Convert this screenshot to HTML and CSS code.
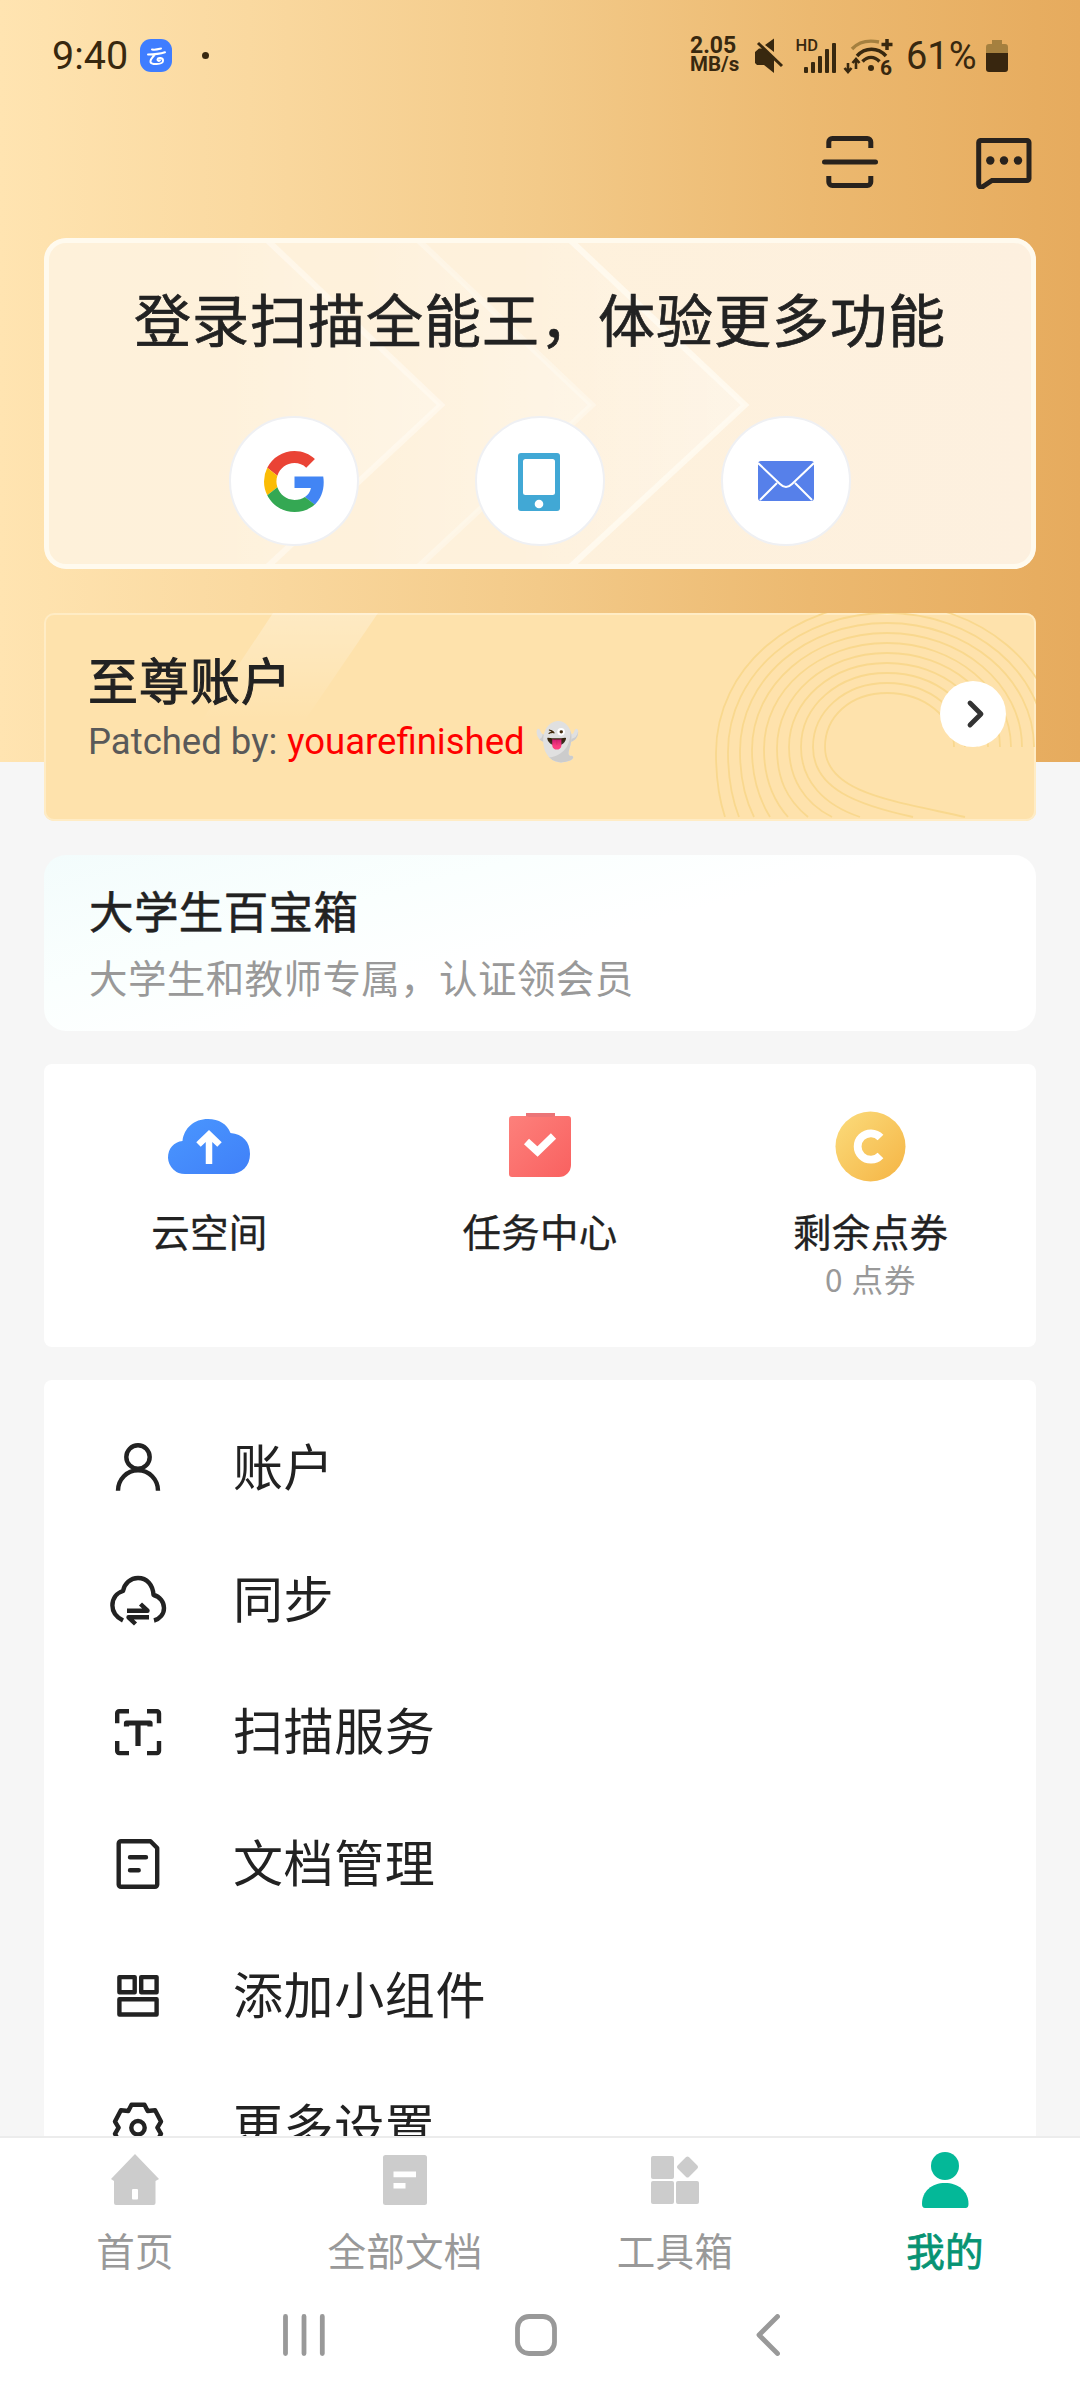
FILE: index.html
```html
<!DOCTYPE html>
<html lang="zh-CN">
<head>
<meta charset="utf-8">
<title>我的</title>
<link rel="stylesheet" href="styles.css">
</head>
<body>
<div class="screen">
  <header class="status">
    <div class="status-left">
      <span class="clock">9:40</span>
      <svg class="cloud-badge" width="32" height="33" viewBox="0 0 32 33"><rect width="32" height="33" rx="11" fill="#3f7dff"/><path d="M12 10.500c4 .6 6-.2 9-1M8 15.500c6 0 12-.6 17-2.200M15 15.500c-2 2-5 5-4.500 7.500.5 2.700 12 3 12.500-1 .4-3.500-5-4-5.500-1.500-.2 1.500 1.500 1.800 2.500.8" fill="none" stroke="#fff" stroke-width="2" stroke-linecap="round"/></svg>
      <span class="dot"></span>
    </div>
    <div class="status-right">
      <div class="speed"><span class="rate">2.05</span><span class="unit">MB/s</span></div>
      <svg class="signals" width="146" height="40" viewBox="0 0 146 40">
        <g fill="#38280f">
          <path d="M0 16L4 12.500 9 12.500 19 21.500V37L9 29H2L0 27zM10 9l9-6.500V16z"/>
          <path d="M3 7l24 23" stroke="#38280f" stroke-width="3" fill="none"/>
          <text x="40.500" y="15" class="hd">HD</text>
          <rect x="49" y="31" width="4" height="6" rx="1"/><rect x="56" y="26" width="4" height="11" rx="1"/><rect x="63" y="20" width="4" height="17" rx="1"/><rect x="70" y="13" width="4" height="24" rx="1"/><rect x="77" y="7" width="4" height="30" rx="1"/>
          <circle cx="116" cy="32" r="3"/>
          <path d="M132 3v11M126.500 8.500h11" stroke="#38280f" stroke-width="3.500"/>
          <text x="125" y="38.500" class="wifi-gen">6</text>
        </g>
        <g fill="none" stroke="#38280f" stroke-width="3.400">
          <path d="M97 13c7-7.500 17-9 27-7" stroke="#a5803f"/>
          <path d="M102 20c8-9 21-9 29 0M107.500 25.500c5-5.500 12-5.500 17 0"/>
          <path d="M93 27v9M89.500 32l3.500 4 3.500-4M101 33v-10M97.500 27l3.500-4 3.500 4" stroke-width="2.600"/>
        </g>
      </svg>
      <span class="percent">61%</span>
      <svg class="battery" width="22" height="32" viewBox="0 0 22 32"><path d="M6 0h10v4h3a3 3 0 0 1 3 3v7H0V7a3 3 0 0 1 3-3h3z" fill="#a5803f"/><path d="M0 13h22v16a3 3 0 0 1-3 3H3a3 3 0 0 1-3-3z" fill="#38260f"/></svg>
    </div>
  </header>

  <div class="toolbar">
    <svg width="56" height="53" viewBox="0 0 56 53" fill="none" stroke="#28221d" stroke-width="5"><path d="M6.800 12V6a3.500 3.500 0 0 1 3.500-3.500h35A3.500 3.500 0 0 1 48.800 6v6M6.800 40v6a3.500 3.500 0 0 0 3.500 3.500h35a3.500 3.500 0 0 0 3.500-3.500v-6"/><path d="M2.500 26h51" stroke-linecap="round"/></svg>
    <svg width="56" height="53" viewBox="0 0 56 53"><path d="M5 4.500h46a2 2 0 0 1 2 2v36a2 2 0 0 1-2 2H16L7 50.500c-2 1.200-4.300.5-4.300-2V6.500a2 2 0 0 1 2.300-2z" fill="none" stroke="#28221d" stroke-width="5"/><g fill="#28221d"><circle cx="14.300" cy="24.500" r="4.200"/><circle cx="28" cy="24.500" r="4.200"/><circle cx="42" cy="24.500" r="4.200"/></g></svg>
  </div>

  <main class="content">
    <section class="login">
      <svg class="backdrop" width="992" height="331" viewBox="0 0 992 331">
        <defs><linearGradient id="band" x1="0" y1="0" x2="1" y2="0"><stop offset=".3" stop-color="#fff" stop-opacity="0"/><stop offset="1" stop-color="#fff" stop-opacity=".3"/></linearGradient></defs>
        <path d="M66 0H221L397 167 221 331H66z" fill="url(#band)"/>
        <path d="M221 0H372L548 167 372 331H221L397 167z" fill="url(#band)"/>
        <path d="M372 0H524L701 167 524 331H372L548 167z" fill="url(#band)"/>
        <g fill="none" stroke="#fffcf4" stroke-width="6"><path d="M221 0L397 167 221 331" stroke-opacity=".55"/><path d="M372 0L548 167 372 331" stroke-opacity=".4"/><path d="M524 0L701 167 524 331" stroke-opacity=".7"/></g>
      </svg>
      <h1>登录扫描全能王，体验更多功能</h1>
      <div class="providers">
        <span class="provider"><svg width="61" height="61" viewBox="0 0 48 48"><path fill="#EA4335" d="M24 9.500c3.540 0 6.710 1.220 9.210 3.600l6.850-6.850C35.900 2.380 30.470 0 24 0 14.620 0 6.510 5.380 2.560 13.220l7.980 6.190C12.430 13.720 17.740 9.500 24 9.500z"/><path fill="#4285F4" d="M46.980 24.550c0-1.570-.15-3.090-.38-4.550H24v9.020h12.940c-.58 2.960-2.260 5.480-4.780 7.180l7.730 6c4.510-4.180 7.090-10.360 7.090-17.650z"/><path fill="#FBBC05" d="M10.530 28.590A14.500 14.500 0 0 1 9.770 24c0-1.600.27-3.140.76-4.590l-7.980-6.190A23.900 23.900 0 0 0 0 24c0 3.880.92 7.540 2.560 10.780z"/><path fill="#34A853" d="M24 48c6.480 0 11.930-2.130 15.890-5.810l-7.730-6c-2.150 1.450-4.920 2.300-8.160 2.300-6.260 0-11.570-4.220-13.470-9.910l-7.980 6.190C6.510 42.620 14.620 48 24 48z"/></svg></span>
        <span class="provider phone"><svg width="42" height="58" viewBox="0 0 42 58"><rect width="42" height="58" rx="3" fill="#41a8d5"/><rect x="5" y="6" width="32" height="36" rx="2.500" fill="#fff"/><circle cx="21" cy="51" r="4.300" fill="#fff"/></svg></span>
        <span class="provider"><svg width="56" height="40" viewBox="0 0 56 40"><rect width="56" height="40" rx="3" fill="#5680ea"/><path d="M0 2L22 23c4 4 8 4 12 0L56 2M2 39L19 22M54 39L37 22" fill="none" stroke="#fff" stroke-width="2"/></svg></span>
      </div>
    </section>

    <section class="vip">
      <svg class="backdrop" width="992" height="208" viewBox="0 0 992 208">
        <defs><linearGradient id="stripe" x1="0" y1="0" x2="0" y2="1"><stop offset="0" stop-color="#fff" stop-opacity=".28"/><stop offset="1" stop-color="#fff" stop-opacity="0"/></linearGradient></defs>
        <path d="M229 0H334L259 110H156z" fill="url(#stripe)"/>
        <g fill="none" stroke="#f9d88e" stroke-width="1.800">
          <path d="M910 134C910 104 880 80 843 80S781 104 781 134C781 180 850 188 921 204"/>
          <path d="M921 134C921 99 886 70 843 70S769 99 769 134C769 176 814 192 869 204"/>
          <path d="M933 134C933 93 892 60 843 60S757 93 757 134C757 168 780 192 816 204"/>
          <path d="M944 134C944 88 899 50 843 50S745 88 745 134C745 165 760 190 788 204"/>
          <path d="M956 134C956 82 905 40 843 40S733 82 733 135C733 165 742 186 764 204"/>
          <path d="M967 134C967 77 911 30 843 30S720 77 720 136C720 165 728 186 744 204"/>
          <path d="M978 134C978 71 917 20 843 20S708 71 708 137C708 165 715 186 726 204"/>
          <path d="M990 134C990 66 924 10 843 10S696 66 696 138C696 165 701 186 710 204"/>
          <path d="M1001 134C1001 60 930 0 843 0S684 60 684 139C684 165 688 186 695 204"/>
          <path d="M1013 134C1013 54 936-10 843-10S672 54 672 140C672 165 675 186 681 204"/>
        </g>
      </svg>
      <div class="vip-text">
        <h2>至尊账户</h2>
        <p>Patched by: <em>youarefinished</em> <span class="emoji">👻</span></p>
      </div>
      <span class="go"><svg width="20" height="30" viewBox="0 0 20 30"><path d="M4 4l11 11L4 26" fill="none" stroke="#333" stroke-width="4.800" stroke-linecap="round" stroke-linejoin="round"/></svg></span>
    </section>

    <section class="student">
      <h3>大学生百宝箱</h3>
      <p>大学生和教师专属，认证领会员</p>
    </section>

    <section class="quick">
      <div class="quick-item">
        <svg width="84" height="72" viewBox="0 0 84 72"><defs><linearGradient id="blue" x1="0" y1="0" x2="1" y2="1"><stop offset="0" stop-color="#4a97ff"/><stop offset="1" stop-color="#4080f8"/></linearGradient></defs><path d="M18 63A17 17 0 0 1 1 47C1 37 7 31 15.500 30 17 17 27 8 41 8c11 0 19 5 22.500 14C76 23 83 31 83 43c0 12-8 20-20 20z" fill="url(#blue)"/><path d="M42 53V25M31.500 33.500L42 23.500 52.500 33.500" fill="none" stroke="#fff" stroke-width="6.500"/></svg>
        <span class="label">云空间</span>
      </div>
      <div class="quick-item">
        <svg width="62" height="72" viewBox="0 0 62 72"><defs><linearGradient id="red" x1="0" y1="0" x2="1" y2="1"><stop offset="0" stop-color="#fd817c"/><stop offset="1" stop-color="#f96160"/></linearGradient></defs><path d="M3 5H17V2H46V5H59a3 3 0 0 1 3 3V54A12 12 0 0 1 50 66H3a3 3 0 0 1-3-3V8a3 3 0 0 1 3-3z" fill="url(#red)"/><path d="M17 5V2H46V5l-3 1H20z" fill="#eb7477"/><path d="M17.500 30.500l11 10 16-15.500" fill="none" stroke="#fff" stroke-width="7.500"/></svg>
        <span class="label">任务中心</span>
      </div>
      <div class="quick-item">
        <svg width="72" height="72" viewBox="0 0 72 72"><defs><linearGradient id="gold" x1="0" y1="0" x2="1" y2="1"><stop offset="0" stop-color="#fbdc7c"/><stop offset="1" stop-color="#f5b444"/></linearGradient></defs><circle cx="35.500" cy="35.500" r="35" fill="url(#gold)"/><path d="M45.500 26.500A13.200 13.200 0 1 0 45.500 44.500" fill="none" stroke="#fff" stroke-width="7.800"/></svg>
        <span class="label">剩余点券</span>
        <span class="sub">0 点券</span>
      </div>
    </section>

    <ul class="menu">
      <li><svg class="line-icon" viewBox="0 0 60 60"><circle cx="30" cy="20" r="11.700"/><path d="M10 53.700a20 20.500 0 0 1 40 0"/></svg><span>账户</span></li>
      <li><svg class="line-icon" viewBox="0 0 60 60"><path d="M15 51.500C8 48 4.400 43 4.400 36.500 4.400 29.500 8.500 24 15 22 16.500 14.500 22.500 9 30 9 39 9 45 16 45.500 26 52 27.500 56 33 56 39 56 45 52 50 46 51.500"/><path d="M19 41.700H39.500L32.500 35M41 48.300H20.500L27.500 55"/></svg><span>同步</span></li>
      <li><svg class="line-icon" viewBox="0 0 60 60"><path d="M21 10.200H11.200a2 2 0 0 0-2 2V22.300M39 10.200H49a2 2 0 0 1 2 2V22.300M21 52.100H11.200a2 2 0 0 1-2-2V40M39 52.100H49a2 2 0 0 0 2-2V40"/><path d="M18.500 25.500V22H42V25.500M30 22V45" stroke-width="5.200"/></svg><span>扫描服务</span></li>
      <li><svg class="line-icon" viewBox="0 0 60 60"><path d="M13 8.200H42.500L49.200 15V51.500a2.300 2.300 0 0 1-2.300 2.300H13a2.300 2.300 0 0 1-2.300-2.300V10.500A2.300 2.300 0 0 1 13 8.200z"/><path d="M22 24.300H38M22 37.300H30.700" stroke-linecap="round"/></svg><span>文档管理</span></li>
      <li><svg class="line-icon" viewBox="0 0 60 60"><path d="M11.400 12.100H26.700V27.300H11.400zM33.200 12.100H48.600V27.300H33.200zM11.400 34.200H48.600V49.500H11.400z"/></svg><span>添加小组件</span></li>
      <li><svg class="line-icon" viewBox="0 0 60 60"><circle cx="30" cy="30.700" r="6.700"/><path d="M23.500 7.800H36.500L39.700 14 47.100 13.300 53 24.600 49.400 30.700 53 36.800 47.100 48.100 39.700 47.400 36.500 53.600H23.500L20.300 47.400 12.900 48.100 7 36.800 10.600 30.700 7 24.600 12.900 13.300 20.300 14z"/></svg><span>更多设置</span></li>
    </ul>
  </main>

  <nav class="tabs">
    <div class="tab"><svg width="56" height="58" viewBox="0 0 56 58"><path d="M28 3L52 28 48.500 30V52a2 2 0 0 1-2 2H9a2 2 0 0 1-2-2V30L4 28z" fill="#ccc"/><rect x="25" y="38" width="6" height="10.500" rx="1" fill="#fff"/></svg><span>首页</span></div>
    <div class="tab"><svg width="56" height="58" viewBox="0 0 56 58"><rect x="6" y="4" width="44" height="50" rx="2.500" fill="#ccc"/><path d="M16.500 20.500H39V26.300H16.500zM16.500 32H28.500V37.500H16.500z" fill="#fff"/></svg><span>全部文档</span></div>
    <div class="tab"><svg width="56" height="58" viewBox="0 0 56 58" fill="#ccc"><rect x="4" y="5" width="23" height="23" rx="2"/><rect x="4" y="30" width="23" height="23" rx="2"/><rect x="29" y="30" width="23" height="23" rx="2"/><rect x="32.500" y="8" width="16" height="16" rx="2" transform="rotate(45 40.500 16)"/></svg><span>工具箱</span></div>
    <div class="tab active"><svg width="56" height="58" viewBox="0 0 56 58" fill="#04b898"><circle cx="28" cy="15" r="14"/><path d="M5 53C5 40 15 32 28 32s23.500 8 23.500 21q0 4-3 4H8q-3 0-3-4z"/></svg><span>我的</span></div>
  </nav>

  <nav class="system">
    <svg width="42" height="42" viewBox="0 0 42 42"><path d="M2.500 2.500v37M21 2.500v37M39.300 2.500v37"/></svg>
    <svg width="42" height="42" viewBox="0 0 42 42"><rect x="2.500" y="2.500" width="37" height="37" rx="11.500"/></svg>
    <svg width="24" height="42" viewBox="0 0 24 42"><path d="M21.500 2.500L3 21 21.500 39.500"/></svg>
  </nav>
</div>
</body>
</html>
```
FILE: styles.css
```css
* { box-sizing: border-box; margin: 0; padding: 0; }

body {
  width: 1080px;
  height: 2400px;
  overflow: hidden;
  font-family: Roboto, "Noto Sans CJK SC", sans-serif;
  color: #222;
}

h1, h2, h3, .label, .menu, .tabs, .student, .sub {
  font-family: "Noto Sans CJK SC", sans-serif;
}

svg { display: block; flex: none; }

.screen {
  display: flex;
  flex-direction: column;
  height: 2400px;
  background:
    linear-gradient(90deg, #ffe4b1 0, #fad9a0 23%, #f3ca89 50%, #ecb970 75%, #e7ad60 96%, #e6ab5e) 0 0 / 1080px 762px no-repeat,
    #f6f6f6;
}

/* Status bar */
.status {
  display: flex;
  justify-content: space-between;
  height: 112px;
  padding: 0 72px 0 52px;
  color: #38280f;
}
.status-left, .status-right { display: flex; align-items: center; height: 111px; }
.clock { width: 88px; font-size: 39.500px; }
.dot { width: 7px; height: 7px; margin-left: 30px; border-radius: 50%; background: #38280f; }
.speed { display: flex; flex-direction: column; width: 65px; font-weight: 700; }
.rate { font-size: 23px; line-height: 18px; }
.unit { font-size: 20.500px; line-height: 19px; }
.signals { overflow: visible; }
.hd { font: 500 16.500px Roboto, sans-serif; }
.wifi-gen { font: 700 21px Roboto, sans-serif; }
.percent { width: 85px; padding-left: 5px; font-size: 38px; }

/* Top actions */
.toolbar {
  display: flex;
  justify-content: flex-end;
  gap: 98px;
  height: 126px;
  padding: 24px 48px 0;
}

/* Cards */
.content {
  display: flex;
  flex: 1;
  flex-direction: column;
  min-height: 0;
  padding: 0 44px;
  overflow: hidden;
}
.content > section { flex: none; }
.backdrop { position: absolute; inset: 0; }

.login {
  position: relative;
  height: 331px;
  margin-bottom: 44px;
  padding-top: 43px;
  overflow: hidden;
  border-radius: 22px;
  background: linear-gradient(90deg, #fef1da, #fef1dc 50%, #fdf0df);
}
.login::after {
  content: "";
  position: absolute;
  inset: 0;
  border: 5px solid #fffaee;
  border-radius: 22px;
}
.login h1 {
  position: relative;
  font-size: 57px;
  font-weight: 400;
  letter-spacing: 1px;
  line-height: 72px;
  text-align: center;
  white-space: nowrap;
  -webkit-text-stroke: .7px;
}
.providers {
  position: relative;
  display: flex;
  justify-content: center;
  gap: 116px;
  margin-top: 63px;
}
.provider {
  display: flex;
  align-items: center;
  justify-content: center;
  width: 130px;
  height: 130px;
  border: 2px solid #eff0f3;
  border-radius: 50%;
  background: #fff;
}
.phone { padding: 2px 3px 0 0; }

.vip {
  position: relative;
  display: flex;
  align-items: flex-start;
  justify-content: space-between;
  height: 208px;
  margin-bottom: 34px;
  padding: 35px 30px 0 44px;
  overflow: hidden;
  border-radius: 10px;
  background: #fee2ac;
  box-shadow: inset 0 0 0 2px #ffecc5;
}
.vip-text, .go { position: relative; }
.vip h2 {
  font-size: 50px;
  font-weight: 400;
  letter-spacing: 1px;
  line-height: 60px;
  -webkit-text-stroke: 1px;
}
.vip p {
  display: flex;
  align-items: center;
  gap: 10px;
  margin-top: 9px;
  color: #595959;
  font-size: 36.500px;
  line-height: 50px;
  white-space: nowrap;
}
.vip em { color: #f00; font-style: normal; }
.emoji { font-size: 36px; }
.go {
  display: flex;
  align-items: center;
  justify-content: center;
  width: 66px;
  height: 66px;
  margin-top: 33px;
  padding-left: 5px;
  border-radius: 50%;
  background: #fff;
}

.student {
  height: 176px;
  margin-bottom: 33px;
  padding: 25px 45px;
  border-radius: 22px;
  background: linear-gradient(165deg, #f3fcfc 0, #fafffe 30%, #fff 52%);
}
.student h3 {
  font-size: 44.500px;
  font-weight: 400;
  letter-spacing: .4px;
  line-height: 60px;
  -webkit-text-stroke: .6px;
}
.student p { margin-top: 9px; color: #999; font-size: 38.500px; letter-spacing: .4px; line-height: 54px; }

.quick {
  display: grid;
  grid-template-columns: repeat(3, 1fr);
  height: 283px;
  margin-bottom: 33px;
  padding-top: 47px;
  border-radius: 8px;
  background: #fff;
}
.quick-item { display: flex; flex-direction: column; align-items: center; }
.label { margin-top: 19px; font-size: 38.500px; letter-spacing: .3px; line-height: 56px; -webkit-text-stroke: .3px; }
.sub { color: #999; font-size: 31.500px; letter-spacing: 1px; line-height: 40px; }

.menu {
  flex: none;
  padding-top: 21px;
  border-radius: 8px;
  background: #fff;
  list-style: none;
}
.menu li {
  display: flex;
  align-items: center;
  gap: 65px;
  height: 132px;
  padding-left: 64px;
  font-size: 50px;
  letter-spacing: .6px;
  line-height: 74px;
}
.menu span { padding-bottom: 6px; }
.line-icon {
  width: 60px;
  height: 60px;
  fill: none;
  stroke: #222;
  stroke-width: 4.400;
  stroke-linejoin: round;
}

/* Bottom tabs */
.tabs {
  display: grid;
  flex: none;
  grid-template-columns: repeat(4, 1fr);
  height: 144px;
  padding-top: 13px;
  border-top: 2px solid #ececec;
  background: #fff;
}
.tab {
  display: flex;
  flex-direction: column;
  align-items: center;
  color: #999;
  font-size: 38.500px;
  letter-spacing: .3px;
  line-height: 56px;
}
.tab span { margin-top: 12px; }
.tab.active { color: #079373; -webkit-text-stroke: .8px; }

/* System navigation */
.system {
  display: flex;
  flex: none;
  align-items: flex-start;
  height: 120px;
  padding: 34px 0 0 283px;
  background: #fff;
}
.system svg { fill: none; stroke: #999; stroke-width: 4.800; stroke-linecap: round; stroke-linejoin: round; }
.system svg + svg { margin-left: 190px; }
.system svg:last-child { margin-left: 199px; }
```
